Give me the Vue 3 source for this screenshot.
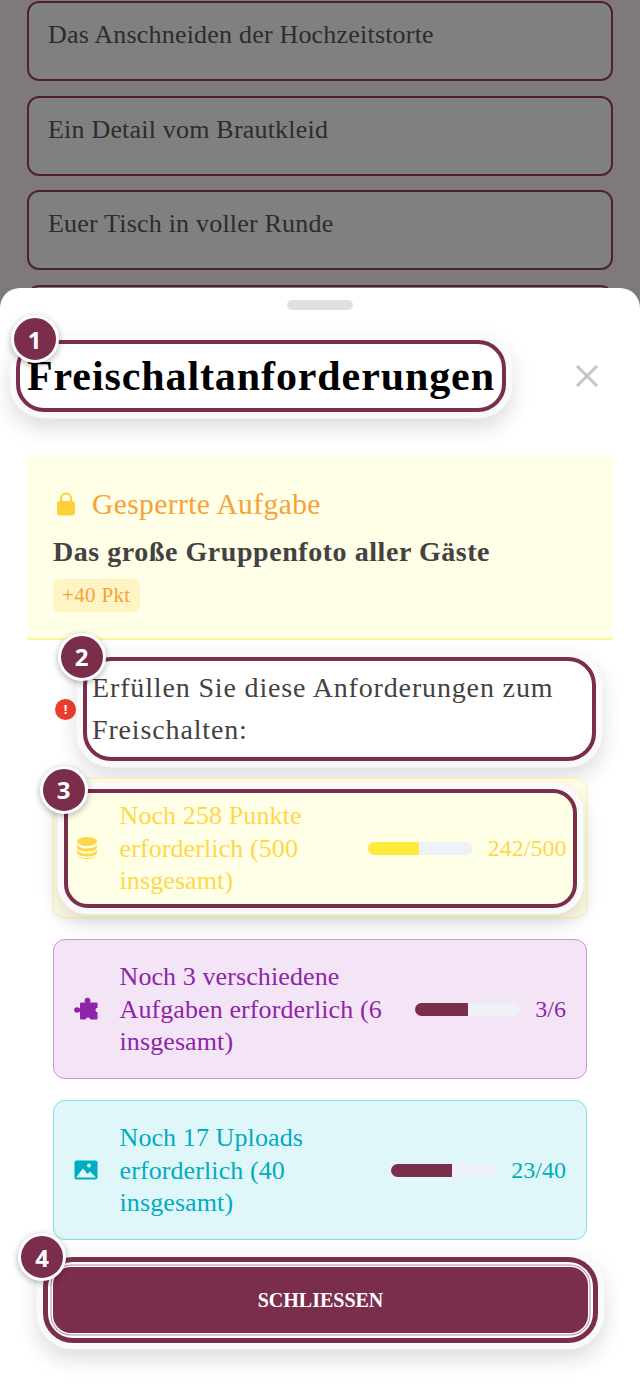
<template>
  <div class="page">
    <div class="task-list">
      <div class="task" v-for="task in tasks" :key="task">{{ task }}</div>
    </div>

    <div class="sheet">
      <div class="handle"></div>

      <div class="sheet-head">
        <h2 class="title mark">
          <span class="badge">1</span>
          Freischaltanforderungen
        </h2>
        <svg class="close" viewBox="0 0 24 24"><path d="M2 2 22 22M22 2 2 22" /></svg>
      </div>

      <div class="locked">
        <div class="locked-top">
          <svg class="lock" viewBox="0 0 18 24">
            <path d="M4 11V6.500a5 5 0 0 1 10 0V11" fill="none" stroke="#fdd03b" stroke-width="2" />
            <rect x="0" y="9" width="18" height="14.500" rx="3" fill="#fdd03b" />
          </svg>
          <span>Gesperrte Aufgabe</span>
        </div>
        <h3>Das große Gruppenfoto aller Gäste</h3>
        <span class="chip">+40 Pkt</span>
      </div>

      <div class="intro">
        <span class="alert">!</span>
        <p class="mark">
          <span class="badge badge-2">2</span>
          Erfüllen Sie diese Anforderungen zum Freischalten:
        </p>
      </div>

      <div class="req-list">
        <div class="req" v-for="req in reqs" :key="req.kind" :class="req.kind">
          <div class="req-inner" :class="{ mark: req.marked }">
            <span v-if="req.marked" class="badge badge-3">3</span>
            <svg v-if="req.kind === 'points'" class="req-icon" viewBox="0 0 20 24">
              <ellipse cx="10" cy="5.500" rx="10" ry="4.500" />
              <path d="M0 8.500c2 3 5 3.800 10 3.800s8-.8 10-3.800v3c0 2.500-4.500 4.200-10 4.200S0 14 0 11.500z" />
              <path d="M0 13.700c2 3 5 3.800 10 3.800s8-.8 10-3.800v2.800c0 2.500-4.500 4.200-10 4.200S0 19 0 16.500z" />
              <path d="M1 19.500c2 2 5 2.600 9 2.600s7-.6 9-2.600c-.8 2.300-4.500 3.500-9 3.500s-8.200-1.200-9-3.500z" />
            </svg>
            <svg v-else-if="req.kind === 'tasks'" class="req-icon" viewBox="0 0 24 24">
              <rect x="6" y="5.500" width="17.500" height="17" rx="1" />
              <circle cx="13.500" cy="3.600" r="2.900" />
              <rect x="11.800" y="4" width="3.400" height="3" />
              <circle cx="3" cy="13" r="2.800" />
              <rect x="3" y="11.300" width="4" height="3.400" />
              <circle cx="23.800" cy="13" r="2.300" fill="#f3e5f5" />
              <circle cx="14" cy="22.800" r="2.300" fill="#f3e5f5" />
            </svg>
            <svg v-else class="req-icon" viewBox="0 0 24 20">
              <rect x="0.500" y="0.500" width="23" height="19" rx="2" />
              <circle cx="15" cy="5.500" r="1.900" fill="#e0f7fa" />
              <path d="M2 17.500 9 8.500l4.500 5.500 2.500-2.500 6 6z" fill="#e0f7fa" />
            </svg>
            <span class="req-text">
              <template v-for="(line, i) in req.lines" :key="i">{{ line }}<br /></template>
            </span>
            <span class="bar"><span class="bar-fill" :style="{ width: req.percent + '%' }"></span></span>
            <span class="req-value">{{ req.value }}</span>
          </div>
        </div>
      </div>

      <div class="close-wrap mark">
        <span class="badge badge-4">4</span>
        <button class="close-btn">SCHLIESSEN</button>
      </div>
    </div>
  </div>
</template>

<script setup>
const tasks = [
  "Das Anschneiden der Hochzeitstorte",
  "Ein Detail vom Brautkleid",
  "Euer Tisch in voller Runde",
  "Die schönsten Momente",
];

const reqs = [
  {
    kind: "points",
    marked: true,
    lines: ["Noch 258 Punkte", "erforderlich (500", "insgesamt)"],
    percent: 48.4,
    value: "242/500",
  },
  {
    kind: "tasks",
    lines: ["Noch 3 verschiedene", "Aufgaben erforderlich (6", "insgesamt)"],
    percent: 50,
    value: "3/6",
  },
  {
    kind: "uploads",
    lines: ["Noch 17 Uploads", "erforderlich (40", "insgesamt)"],
    percent: 57.5,
    value: "23/40",
  },
];
</script>

<style>
html,
body {
  margin: 0;
  background: #7e797c;
}
</style>

<style scoped>
* {
  box-sizing: border-box;
}

.page {
  position: relative;
  width: 640px;
  height: 1385px;
  overflow: hidden;
  font-family: "Liberation Serif", "DejaVu Serif", serif;
  background: #7e797c;
}

.task-list {
  padding: 1px 27px 0;
  display: flex;
  flex-direction: column;
  gap: 14.500px;
}

.task {
  height: 80px;
  padding: 17px 19px 0;
  background: #808080;
  border: 2px solid #4f2033;
  border-radius: 12px;
  font-size: 26px;
  letter-spacing: 0.2px;
  line-height: 30px;
  color: #2c2c2c;
}

.sheet {
  position: absolute;
  left: 0;
  right: 0;
  top: 288px;
  bottom: 0;
  background: #fff;
  border-radius: 20px 20px 0 0;
}

.handle {
  width: 66px;
  height: 10px;
  margin: 12px auto 0;
  background: #e0e0e0;
  border-radius: 5px;
}

.sheet-head {
  display: flex;
  align-items: center;
  justify-content: space-between;
  margin-top: 30px;
  padding: 0 41px 0 16px;
}

.mark {
  position: relative;
  border: 4px solid #7b2d4c;
  border-radius: 28px;
  box-shadow: 0 0 0 6.500px rgba(250, 250, 250, 0.96), 0 10px 22px 6px rgba(0, 0, 0, 0.14);
}

.badge {
  position: absolute;
  z-index: 2;
  width: 48px;
  height: 48px;
  display: flex;
  align-items: center;
  justify-content: center;
  background: #7b2d4c;
  border: 3px solid #fff;
  border-radius: 50%;
  box-shadow: 0 2px 7px rgba(0, 0, 0, 0.3);
  font-family: "Open Sans", sans-serif;
  font-size: 24px;
  font-weight: 700;
  color: #fff;
}

.title {
  width: 490px;
  height: 72px;
  margin: 0;
  padding-left: 7px;
  display: flex;
  align-items: center;
  font-size: 42px;
  letter-spacing: 0.9px;
  font-weight: 700;
  color: #000;
  white-space: nowrap;
}

.title .badge {
  left: -9px;
  top: -29px;
}

.close {
  width: 24px;
  height: 24px;
  fill: none;
  stroke: #c4c4c4;
  stroke-width: 3;
}

.locked {
  margin: 43px 27px 0;
  height: 185px;
  padding: 34px 26px 0;
  background: #fffee6;
  border-bottom: 2px solid #fff59d;
}

.locked-top {
  display: flex;
  align-items: center;
  gap: 17px;
  font-size: 29.500px;
  letter-spacing: 0.4px;
  line-height: 30px;
  color: #f4a338;
}

.lock {
  width: 18px;
  height: 24px;
  margin-left: 4px;
}

.locked h3 {
  margin: 18px 0 0;
  font-size: 28px;
  font-weight: 700;
  letter-spacing: 0.55px;
  line-height: 30px;
  color: #424242;
}

.chip {
  display: inline-block;
  height: 33px;
  margin-top: 12px;
  padding: 0 9px;
  background: #fff4c4;
  border-radius: 6px;
  font-size: 21px;
  letter-spacing: 0.35px;
  line-height: 33px;
  color: #f4a338;
}

.intro {
  display: flex;
  align-items: center;
  gap: 8px;
  margin-top: 17px;
  padding: 0 44px 0 55px;
}

.alert {
  flex: none;
  width: 21px;
  height: 21px;
  background: #ee3e2e;
  border-radius: 50%;
  font-family: "Open Sans", sans-serif;
  font-size: 13px;
  font-weight: 700;
  line-height: 21px;
  text-align: center;
  color: #fff;
}

.intro p {
  width: 513px;
  height: 104px;
  margin: 0 0 0 -1px;
  padding: 6px 18px 0 5px;
  font-size: 28px;
  letter-spacing: 0.85px;
  line-height: 42px;
  color: #424242;
}

.badge-2 {
  left: -29px;
  top: -28px;
}

.req-list {
  display: flex;
  flex-direction: column;
  gap: 21px;
  margin: 17px 53px 0;
}

.req {
  position: relative;
  height: 140px;
  border: 1.500px solid;
  border-radius: 12px;
  padding: 0 20px;
  display: flex;
}

.req-inner {
  flex: 1;
  display: flex;
  align-items: center;
  min-width: 0;
}

.req-inner.mark {
  margin: 9.500px -10.500px;
  padding: 0 6px 0 9px;
  border-radius: 24px;
  background: #ffffe8;
}

.badge-3 {
  left: -28px;
  top: -27px;
}

.req-icon {
  flex: none;
  width: 24px;
  height: 24px;
  margin-right: 21.500px;
  fill: currentColor;
}

.points .req-icon {
  width: 20px;
  margin-right: 23px;
}

.req-text {
  flex: 1;
  padding-top: 2px;
  font-size: 26px;
  letter-spacing: 0.1px;
  line-height: 32.500px;
  white-space: nowrap;
}

.bar {
  flex: none;
  width: 105px;
  height: 13px;
  margin: 0 15px 0 0;
  background: #eef2f7;
  border-radius: 7px;
  overflow: hidden;
}

.bar-fill {
  display: block;
  height: 100%;
  background: #7b2d4c;
}

.req-value {
  flex: none;
  font-size: 24px;
}

.points {
  background: #fffde7;
  border-color: #fff59d;
  color: #fdd84a;
  box-shadow: 0 2px 6px rgba(0, 0, 0, 0.05);
}

.points .bar-fill {
  background: #ffeb3b;
}

.tasks {
  background: #f3e5f5;
  border-color: #ce93d8;
  color: #8e24aa;
}

.uploads {
  background: #e0f7fa;
  border-color: #80deea;
  color: #00acc1;
}

.close-wrap {
  margin: 17px 42px 0 43px;
  height: 86px;
  padding: 5px;
  border-width: 5px;
  border-radius: 30px;
  background: #fff;
}

.badge-4 {
  left: -30px;
  top: -29px;
}

.close-btn {
  display: block;
  width: 100%;
  height: 100%;
  border: 0;
  border-radius: 18px;
  background: #7b2d4c;
  box-shadow: 0 0 0 1.500px #fff, 0 0 0 2.500px #b98aa0;
  font-family: inherit;
  font-size: 20px;
  font-weight: 700;
  color: #fff;
}
</style>
